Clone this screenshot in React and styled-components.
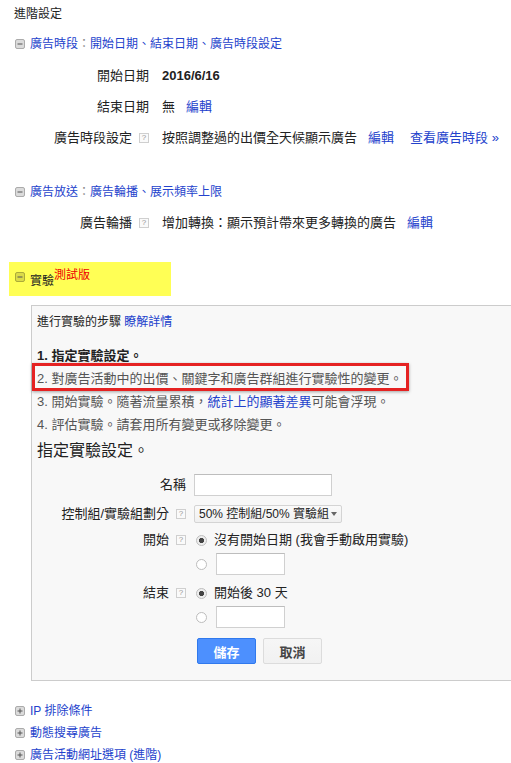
import React from 'react';
import styled, { createGlobalStyle } from 'styled-components';

const Global = createGlobalStyle`
  html, body { margin: 0; padding: 0; background: #fff; }
  body {
    font-family: "Liberation Sans", "Noto Sans CJK TC", sans-serif;
    color: #222;
    overflow: hidden;
    width: 511px;
    height: 763px;
  }
`;

const LINK = '#2342cc';

const Page = styled.div`
  padding: 6px 0 0 14px;
  display: flex;
  flex-direction: column;
  align-items: flex-start;
`;

const Title = styled.div`
  font-size: 12px;
  line-height: 16px;
  color: #222;
`;

const SectionHeader = styled.div`
  display: flex;
  align-items: center;
  gap: 5px;
  margin-top: ${p => p.$mt || 0}px;
  margin-left: 1px;
  font-size: 12px;
  line-height: ${p => p.$lh || 16}px;
  white-space: nowrap;
`;

const Link = styled.a`
  color: ${LINK};
  text-decoration: none;
  cursor: pointer;
  white-space: nowrap;
`;

const Sep = styled.span`
  color: #888;
`;

const ToggleIcon = ({ plus }) => (
  <svg width="10" height="10" viewBox="0 0 10 10" style={{ flex: 'none' }}>
    <rect x="0.5" y="0.5" width="9" height="9" rx="1.5" fill="rgba(0,0,0,0.14)" stroke="rgba(0,0,0,0.28)" />
    <line x1="2.5" y1="5" x2="7.5" y2="5" stroke="#555" strokeWidth="1" />
    {plus && <line x1="5" y1="2.5" x2="5" y2="7.5" stroke="#555" strokeWidth="1" />}
  </svg>
);

const DetailGrid = styled.div`
  display: grid;
  grid-template-columns: 135px auto;
  column-gap: 13px;
  grid-auto-rows: 31px;
  align-items: center;
  margin-top: ${p => p.$mt || 0}px;
  font-size: 13px;
  line-height: 16px;
`;

const Label = styled.div`
  justify-self: end;
  display: flex;
  align-items: center;
  gap: 7px;
  white-space: nowrap;
  color: #222;
`;

const HelpBox = styled.span`
  display: inline-flex;
  align-items: center;
  justify-content: center;
  box-sizing: border-box;
  width: 10px;
  height: 10px;
  border: 1px solid #cfcfcf;
  background: #fafafa;
  color: #999;
  font-size: 8px;
  line-height: 8px;
  font-family: "Liberation Sans", sans-serif;
`;

const Help = () => <HelpBox>?</HelpBox>;

const Value = styled.div`
  display: flex;
  align-items: center;
  gap: 11px;
  white-space: nowrap;
  font-weight: ${p => (p.$bold ? 700 : 400)};
`;

const FarLink = styled(Link)`
  margin-left: 5px;
`;

const Highlight = styled.div`
  margin-top: 24px;
  margin-left: -5px;
  width: 162px;
  height: 34px;
  box-sizing: border-box;
  background: #ffff55;
  padding: 10px 0 0 6px;
  display: flex;
  align-items: flex-start;
  gap: 5px;
  font-size: 12px;
  line-height: 16px;
  white-space: nowrap;
`;

const HighlightText = styled.span`
  color: #222;
  margin-top: 1px;
`;

const Beta = styled.span`
  color: #e00;
  font-size: 12px;
  position: relative;
  top: -6px;
`;

const Panel = styled.div`
  margin-top: 9px;
  margin-left: 17px;
  width: 520px;
  box-sizing: border-box;
  border: 1px solid #ccc;
  background: #f8f8f8;
  padding: 8px 0 16px 5px;
`;

const Intro = styled.div`
  font-size: 12px;
  line-height: 16px;
  color: #222;
`;

const Steps = styled.div`
  margin-top: 14px;
  font-size: 13px;
  line-height: 23px;
  display: flex;
  flex-direction: column;
  align-items: flex-start;
`;

const Step = styled.div`
  position: relative;
  white-space: nowrap;
  color: ${p => (p.$strong ? '#222' : '#555')};
  font-weight: ${p => (p.$strong ? 700 : 400)};
  ${p =>
    p.$marked &&
    `
    &::after {
      content: "";
      position: absolute;
      top: -4px;
      bottom: -1px;
      left: -5px;
      right: -7px;
      border: 3px solid #e52222;
      box-shadow: 0 1px 3px rgba(0,0,0,0.35);
      pointer-events: none;
    }
  `}
`;

const FormTitle = styled.div`
  margin-top: 5px;
  font-size: 16px;
  line-height: 20px;
  color: #222;
`;

const FormRow = styled.div`
  display: grid;
  grid-template-columns: 149px auto;
  column-gap: 8px;
  align-items: center;
  margin-top: ${p => p.$mt || 0}px;
  font-size: 13px;
  line-height: 16px;
`;

const TextInput = styled.div`
  box-sizing: border-box;
  width: ${p => p.$w}px;
  height: 22px;
  background: #fff;
  border: 1px solid #d0d0d0;
  border-top-color: #bdbdbd;
`;

const Select = styled.div`
  box-sizing: border-box;
  width: 148px;
  height: 18px;
  display: flex;
  align-items: center;
  justify-content: space-between;
  padding: 0 4px 0 4px;
  border: 1px solid #d4d4d4;
  border-radius: 2px;
  background: linear-gradient(#fafafa, #f0f0f0);
  font-size: 12px;
  color: #222;
  white-space: nowrap;
`;

const Caret = styled.span`
  width: 0;
  height: 0;
  border-left: 3px solid transparent;
  border-right: 3px solid transparent;
  border-top: 4px solid #666;
`;

const RadioLine = styled.div`
  display: flex;
  align-items: center;
  gap: ${p => p.$gap || 7}px;
  margin-left: 2px;
  min-height: 18px;
  white-space: nowrap;
  color: #222;
`;

const Radio = styled.span`
  box-sizing: border-box;
  width: 11px;
  height: 11px;
  border-radius: 50%;
  border: 1px solid #bdbdbd;
  background: ${p => (p.$on ? 'radial-gradient(circle, #444 0 2.4px, #eee 2.9px)' : '#fff')};
  flex: none;
`;

const Buttons = styled.div`
  grid-column: 2;
  display: flex;
  gap: 7px;
  margin-left: 3px;
`;

const Button = styled.button`
  box-sizing: border-box;
  width: 59px;
  height: 26px;
  font-family: inherit;
  font-size: 13px;
  font-weight: 700;
  border-radius: 2px;
  padding: 0;
  cursor: pointer;
  border: 1px solid ${p => (p.$primary ? '#3079ed' : '#dcdcdc')};
  background: ${p => (p.$primary ? '#4d90fe' : 'linear-gradient(#f6f6f6, #f1f1f1)')};
  color: ${p => (p.$primary ? '#fff' : '#444')};
`;

const MoreList = styled.div`
  margin-top: 19px;
  display: flex;
  flex-direction: column;
`;

export default function App() {
  return (
    <>
      <Global />
      <Page>
        <Title>進階設定</Title>

        <SectionHeader $mt={14}>
          <ToggleIcon />
          <span>
            <Link>廣告時段</Link>
            <Sep>：</Sep>
            <Link>開始日期、結束日期、廣告時段設定</Link>
          </span>
        </SectionHeader>

        <DetailGrid $mt={8}>
          <Label>開始日期</Label>
          <Value $bold>2016/6/16</Value>
          <Label>結束日期</Label>
          <Value>
            <span>無</span>
            <Link>編輯</Link>
          </Value>
          <Label>
            廣告時段設定 <Help />
          </Label>
          <Value>
            <span>按照調整過的出價全天候顯示廣告</span>
            <Link>編輯</Link>
            <FarLink>查看廣告時段 »</FarLink>
          </Value>
        </DetailGrid>

        <SectionHeader $mt={31}>
          <ToggleIcon />
          <span>
            <Link>廣告放送</Link>
            <Sep>：</Sep>
            <Link>廣告輪播、展示頻率上限</Link>
          </span>
        </SectionHeader>

        <DetailGrid $mt={7}>
          <Label>
            廣告輪播 <Help />
          </Label>
          <Value>
            <span>增加轉換：顯示預計帶來更多轉換的廣告</span>
            <Link>編輯</Link>
          </Value>
        </DetailGrid>

        <Highlight>
          <ToggleIcon />
          <HighlightText>
            實驗<Beta>測試版</Beta>
          </HighlightText>
        </Highlight>

        <Panel>
          <Intro>
            進行實驗的步驟 <Link>瞭解詳情</Link>
          </Intro>
          <Steps>
            <Step $strong>1. 指定實驗設定。</Step>
            <Step $marked>2. 對廣告活動中的出價、關鍵字和廣告群組進行實驗性的變更。</Step>
            <Step>
              3. 開始實驗。隨著流量累積，<Link>統計上的顯著差異</Link>可能會浮現。
            </Step>
            <Step>4. 評估實驗。請套用所有變更或移除變更。</Step>
          </Steps>
          <FormTitle>指定實驗設定。</FormTitle>

          <FormRow $mt={13}>
            <Label>名稱</Label>
            <TextInput $w={138} />
          </FormRow>
          <FormRow $mt={9}>
            <Label>
              控制組/實驗組劃分 <Help />
            </Label>
            <Select>
              <span>50% 控制組/50% 實驗組</span>
              <Caret />
            </Select>
          </FormRow>
          <FormRow $mt={8}>
            <Label>
              開始 <Help />
            </Label>
            <RadioLine>
              <Radio $on />
              <span>沒有開始日期 (我會手動啟用實驗)</span>
            </RadioLine>
          </FormRow>
          <FormRow $mt={4}>
            <span />
            <RadioLine $gap={9}>
              <Radio />
              <TextInput $w={69} />
            </RadioLine>
          </FormRow>
          <FormRow $mt={9}>
            <Label>
              結束 <Help />
            </Label>
            <RadioLine>
              <Radio $on />
              <span>開始後 30 天</span>
            </RadioLine>
          </FormRow>
          <FormRow $mt={4}>
            <span />
            <RadioLine $gap={9}>
              <Radio />
              <TextInput $w={69} />
            </RadioLine>
          </FormRow>
          <FormRow $mt={10}>
            <Buttons>
              <Button $primary>儲存</Button>
              <Button>取消</Button>
            </Buttons>
          </FormRow>
        </Panel>

        <MoreList>
          <SectionHeader $lh={22}>
            <ToggleIcon plus />
            <Link>IP 排除條件</Link>
          </SectionHeader>
          <SectionHeader $lh={22}>
            <ToggleIcon plus />
            <Link>動態搜尋廣告</Link>
          </SectionHeader>
          <SectionHeader $lh={22}>
            <ToggleIcon plus />
            <Link>廣告活動網址選項 (進階)</Link>
          </SectionHeader>
        </MoreList>
      </Page>
    </>
  );
}
